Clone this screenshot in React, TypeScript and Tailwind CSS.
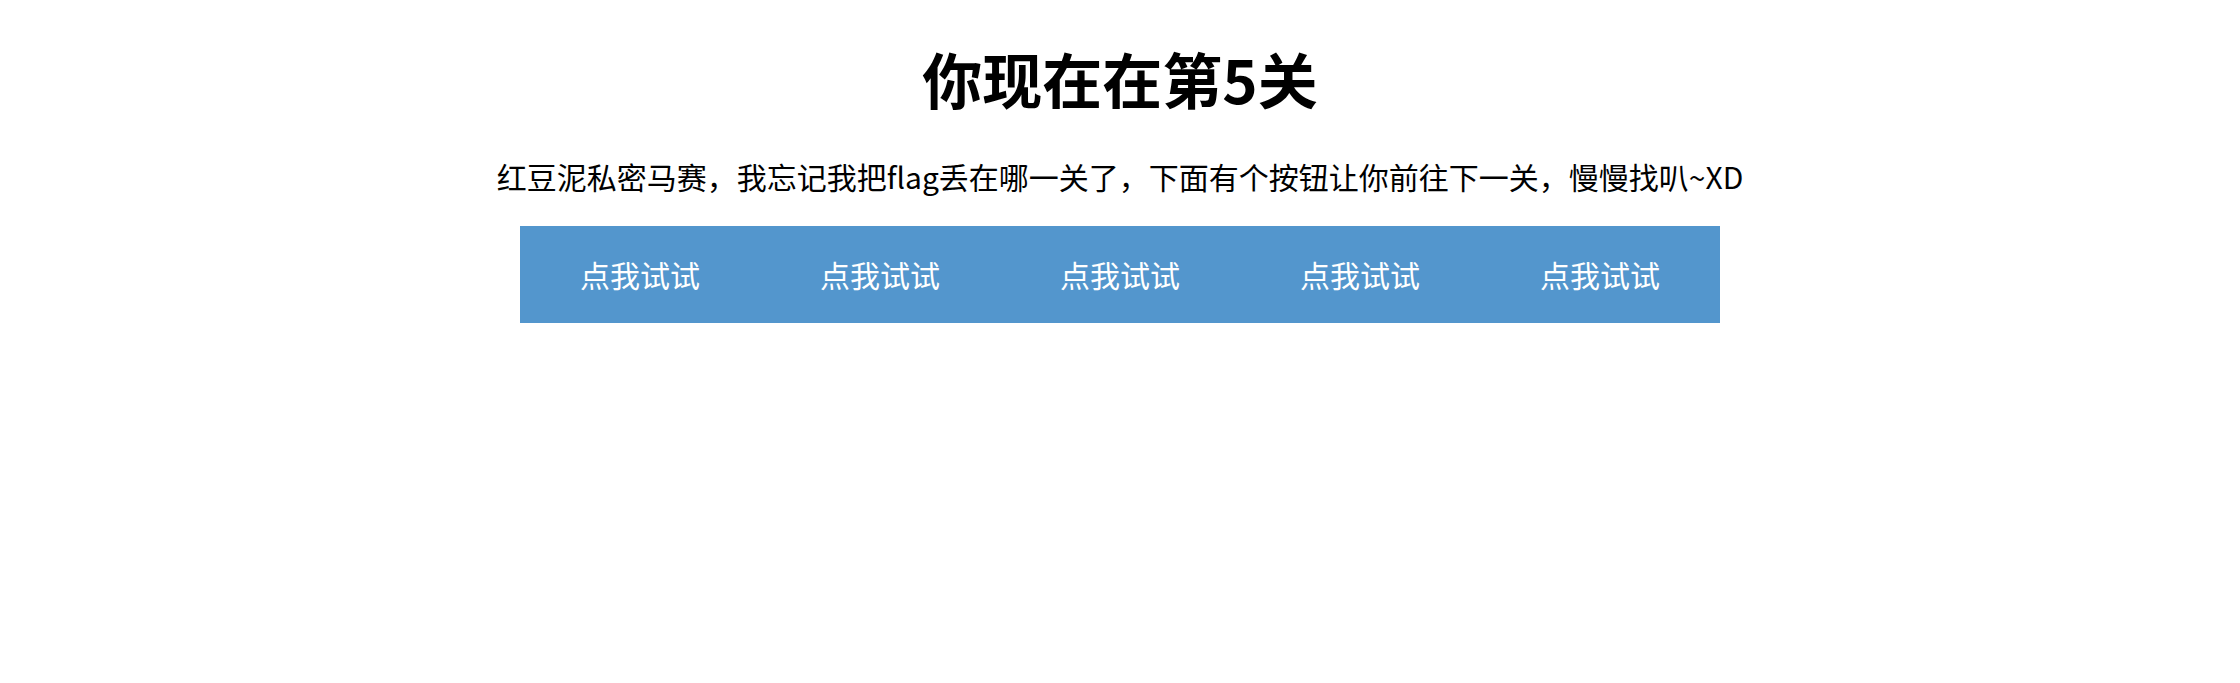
export default function App() {
  const buttons = [1, 2, 3, 4, 5]
  return (
    <div className="min-h-screen bg-white flex flex-col items-center pt-[42px] font-['Microsoft_YaHei','Noto_Sans_CJK_SC',sans-serif]">
      <h1 className="text-[60px] leading-[72px] font-bold text-black">你现在在第5关</h1>
      <p className="mt-[41px] text-[30px] leading-[42px] text-black">
        红豆泥私密马赛，我忘记我把flag丢在哪一关了，下面有个按钮让你前往下一关，慢慢找叭~XD
      </p>
      <div className="mt-[29px] w-[1200px] h-[97px] bg-[#5396cd] flex">
        {buttons.map((b) => (
          <button key={b} className="w-[240px] h-full flex items-center justify-center text-white text-[30px]">
            点我试试
          </button>
        ))}
      </div>
    </div>
  )
}
